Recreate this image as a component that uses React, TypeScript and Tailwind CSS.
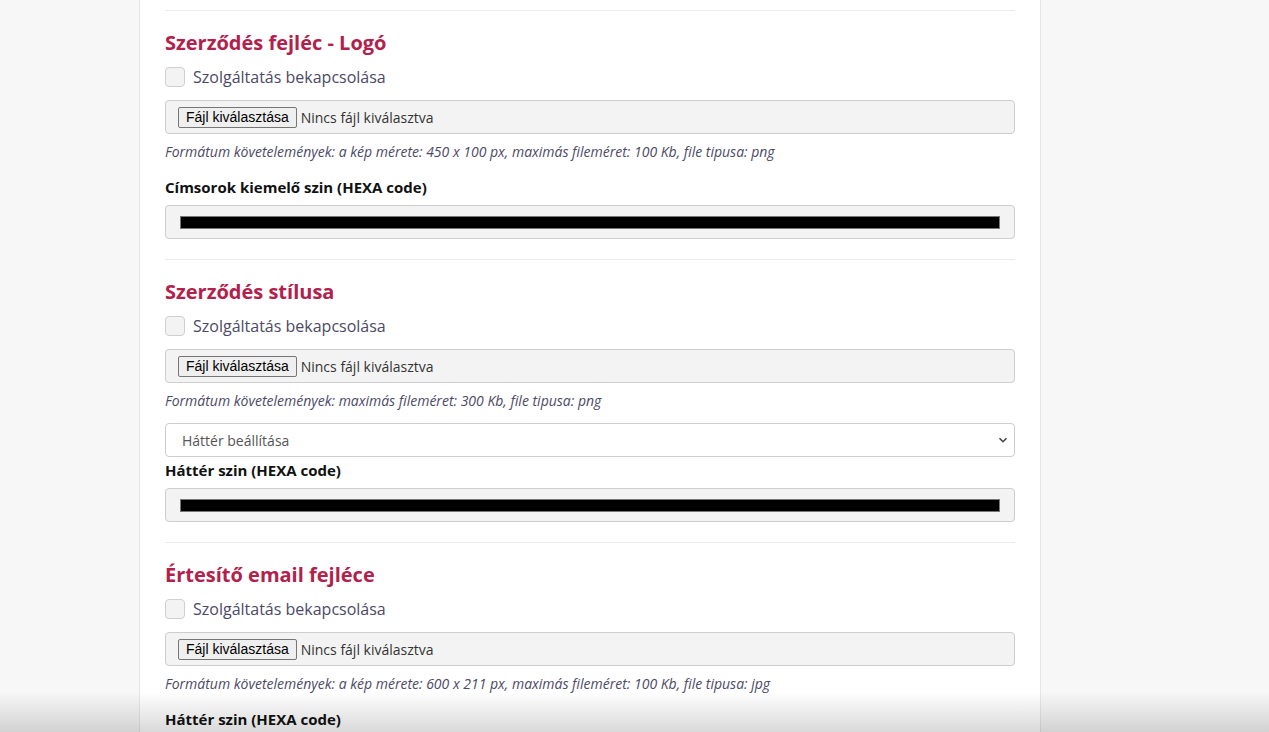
const font = {fontFamily: '"Open Sans", "Liberation Sans", sans-serif'};

const Checkbox = ({label}: {label: string}) => (
  <label className="flex h-[20px] items-center gap-[8px]">
    <span className="h-[20px] w-[20px] rounded-[4px] border border-[#cfcfcf] bg-[#f3f3f3]" />
    <span className="text-[16px] leading-[20px] text-[#4b4a66]">{label}</span>
  </label>
);

const FilePicker = () => (
  <div className="flex h-[34px] items-center rounded-[4px] border border-[#cdcdcd] bg-[#f3f3f3] pl-[12px]">
    <span
      className="flex h-[21px] items-center rounded-[2px] border border-[#767676] bg-[#efefef] px-[7px] text-[14px] text-black"
      style={{fontFamily: '"Liberation Sans", Arial, sans-serif'}}
    >
      Fájl kiválasztása
    </span>
    <span className="ml-[4px] text-[14px] text-[#333]">Nincs fájl kiválasztva</span>
  </div>
);

const ColorField = () => (
  <div className="flex h-[34px] items-center rounded-[4px] border border-[#cdcdcd] bg-[#f3f3f3] px-[14px]">
    <div className="h-[13px] flex-1 border border-[#777] bg-black" />
  </div>
);

const Hint = ({children}: {children: string}) => (
  <p className="mt-[8px] text-[14px] leading-[20px] italic text-[#4b4a66]">{children}</p>
);

const FieldLabel = ({children, className}: {children: string; className?: string}) => (
  <p className={`text-[15px] leading-[22px] font-bold text-[#111] ${className ?? ''}`}>{children}</p>
);

const Heading = ({children}: {children: string}) => (
  <h2 className="mt-[18px] text-[20px] leading-[28px] font-bold text-[#b2214b]">{children}</h2>
);

const Divider = () => <div className="h-px bg-[#ebebeb]" />;

export default function App() {
  return (
    <div className="relative h-[732px] overflow-hidden bg-[#f7f7f7]" style={font}>
      <div className="ml-[139px] h-full w-[902px] border-x border-[#e6e6e6] bg-white px-[25px] pt-[10px]">
        <Divider />

        {/* Szerződés fejléc */}
        <Heading>Szerződés fejléc - Logó</Heading>
        <div className="mt-[10px]">
          <Checkbox label="Szolgáltatás bekapcsolása" />
        </div>
        <div className="mt-[13px]">
          <FilePicker />
        </div>
        <Hint>Formátum követelemények: a kép mérete: 450 x 100 px, maximás fileméret: 100 Kb, file tipusa: png</Hint>
        <FieldLabel className="mt-[14px]">Címsorok kiemelő szin (HEXA code)</FieldLabel>
        <div className="mt-[7px]">
          <ColorField />
        </div>
        <div className="mt-[20px]">
          <Divider />
        </div>

        {/* Szerződés stílusa */}
        <Heading>Szerződés stílusa</Heading>
        <div className="mt-[10px]">
          <Checkbox label="Szolgáltatás bekapcsolása" />
        </div>
        <div className="mt-[13px]">
          <FilePicker />
        </div>
        <Hint>Formátum követelemények: maximás fileméret: 300 Kb, file tipusa: png</Hint>
        <div className="mt-[12px] flex h-[34px] items-center justify-between rounded-[4px] border border-[#cdcdcd] bg-white pl-[16px] pr-[4px]">
          <span className="text-[14px] text-[#555]">Háttér beállítása</span>
          <svg width="10" height="10" viewBox="0 0 10 10" className="mr-[2px]">
            <path d="M1.5 3.2 L5 6.7 L8.5 3.2" fill="none" stroke="#444" strokeWidth="1.6" />
          </svg>
        </div>
        <FieldLabel className="mt-[2px]">Háttér szin (HEXA code)</FieldLabel>
        <div className="mt-[7px]">
          <ColorField />
        </div>
        <div className="mt-[20px]">
          <Divider />
        </div>

        {/* Értesítő email fejléce */}
        <Heading>Értesítő email fejléce</Heading>
        <div className="mt-[10px]">
          <Checkbox label="Szolgáltatás bekapcsolása" />
        </div>
        <div className="mt-[13px]">
          <FilePicker />
        </div>
        <Hint>Formátum követelemények: a kép mérete: 600 x 211 px, maximás fileméret: 100 Kb, file tipusa: jpg</Hint>
        <FieldLabel className="mt-[14px]">Háttér szin (HEXA code)</FieldLabel>
      </div>

      <div className="pointer-events-none absolute inset-x-0 bottom-0 h-[40px] bg-gradient-to-b from-transparent to-black/15" />
    </div>
  );
}
